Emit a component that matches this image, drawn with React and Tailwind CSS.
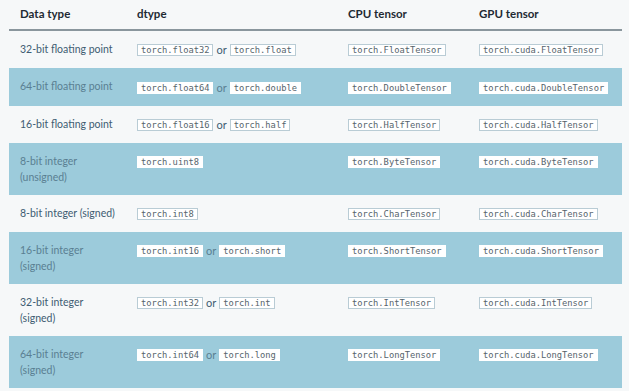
import React from 'react';

const rows = [
    { type: ['32-bit floating point'], dtype: ['torch.float32', 'torch.float'], cpu: 'torch.FloatTensor', gpu: 'torch.cuda.FloatTensor' },
    { type: ['64-bit floating point'], dtype: ['torch.float64', 'torch.double'], cpu: 'torch.DoubleTensor', gpu: 'torch.cuda.DoubleTensor' },
    { type: ['16-bit floating point'], dtype: ['torch.float16', 'torch.half'], cpu: 'torch.HalfTensor', gpu: 'torch.cuda.HalfTensor' },
    { type: ['8-bit integer', '(unsigned)'], dtype: ['torch.uint8'], cpu: 'torch.ByteTensor', gpu: 'torch.cuda.ByteTensor' },
    { type: ['8-bit integer (signed)'], dtype: ['torch.int8'], cpu: 'torch.CharTensor', gpu: 'torch.cuda.CharTensor' },
    { type: ['16-bit integer', '(signed)'], dtype: ['torch.int16', 'torch.short'], cpu: 'torch.ShortTensor', gpu: 'torch.cuda.ShortTensor' },
    { type: ['32-bit integer', '(signed)'], dtype: ['torch.int32', 'torch.int'], cpu: 'torch.IntTensor', gpu: 'torch.cuda.IntTensor' },
    { type: ['64-bit integer', '(signed)'], dtype: ['torch.int64', 'torch.long'], cpu: 'torch.LongTensor', gpu: 'torch.cuda.LongTensor' }
];

const Code = ({ children, shaded }) => (
    <code
        className={
            'inline-block align-middle px-[3px] text-[8.75px] leading-[10px] text-[#56646c] border ' +
            (shaded ? 'bg-white border-white' : 'bg-white border-[#b9ccd5]')
        }
        style={{ fontFamily: '"DejaVu Sans Mono", "Liberation Mono", monospace' }}
    >
        {children}
    </code>
);

export default function App() {
    return (
        <div className="min-h-screen bg-[#f6f8f9] pl-[9px] pr-[7px]" style={{ fontFamily: 'Lato, "Open Sans", sans-serif' }}>
            {/* Header */}
            <div className="grid grid-cols-[117px_211px_131px_1fr] border-b-2 border-[#8a969d] pt-[6px] pb-[7px] text-[11.5px] leading-[16px] font-bold text-[#1e2a33]">
                <div className="pl-[11px]">Data type</div>
                <div className="pl-[11px]">dtype</div>
                <div className="pl-[11px]">CPU tensor</div>
                <div className="pl-[11px]">GPU tensor</div>
            </div>

            {rows.map((row, i) => {
                const shaded = i % 2 === 1;
                return (
                    <div
                        key={i}
                        className={
                            'grid grid-cols-[117px_211px_131px_1fr] items-start min-h-[37px] py-[10px] text-[10.5px] leading-[16px] ' +
                            (shaded ? 'bg-[#9ccbdb] text-[#5a7f92]' : 'text-[#405c72]')
                        }
                    >
                        <div className="pl-[11px]">
                            {row.type.map((line, j) => (
                                <div key={j}>{line}</div>
                            ))}
                        </div>
                        <div className="pl-[11px] whitespace-nowrap">
                            <Code shaded={shaded}>{row.dtype[0]}</Code>
                            {row.dtype[1] && (
                                <>
                                    <span className="align-middle mx-[3px] text-[11px]">or</span>
                                    <Code shaded={shaded}>{row.dtype[1]}</Code>
                                </>
                            )}
                        </div>
                        <div className="pl-[11px] whitespace-nowrap">
                            <Code shaded={shaded}>{row.cpu}</Code>
                        </div>
                        <div className="pl-[11px] whitespace-nowrap">
                            <Code shaded={shaded}>{row.gpu}</Code>
                        </div>
                    </div>
                );
            })}
        </div>
    );
}
